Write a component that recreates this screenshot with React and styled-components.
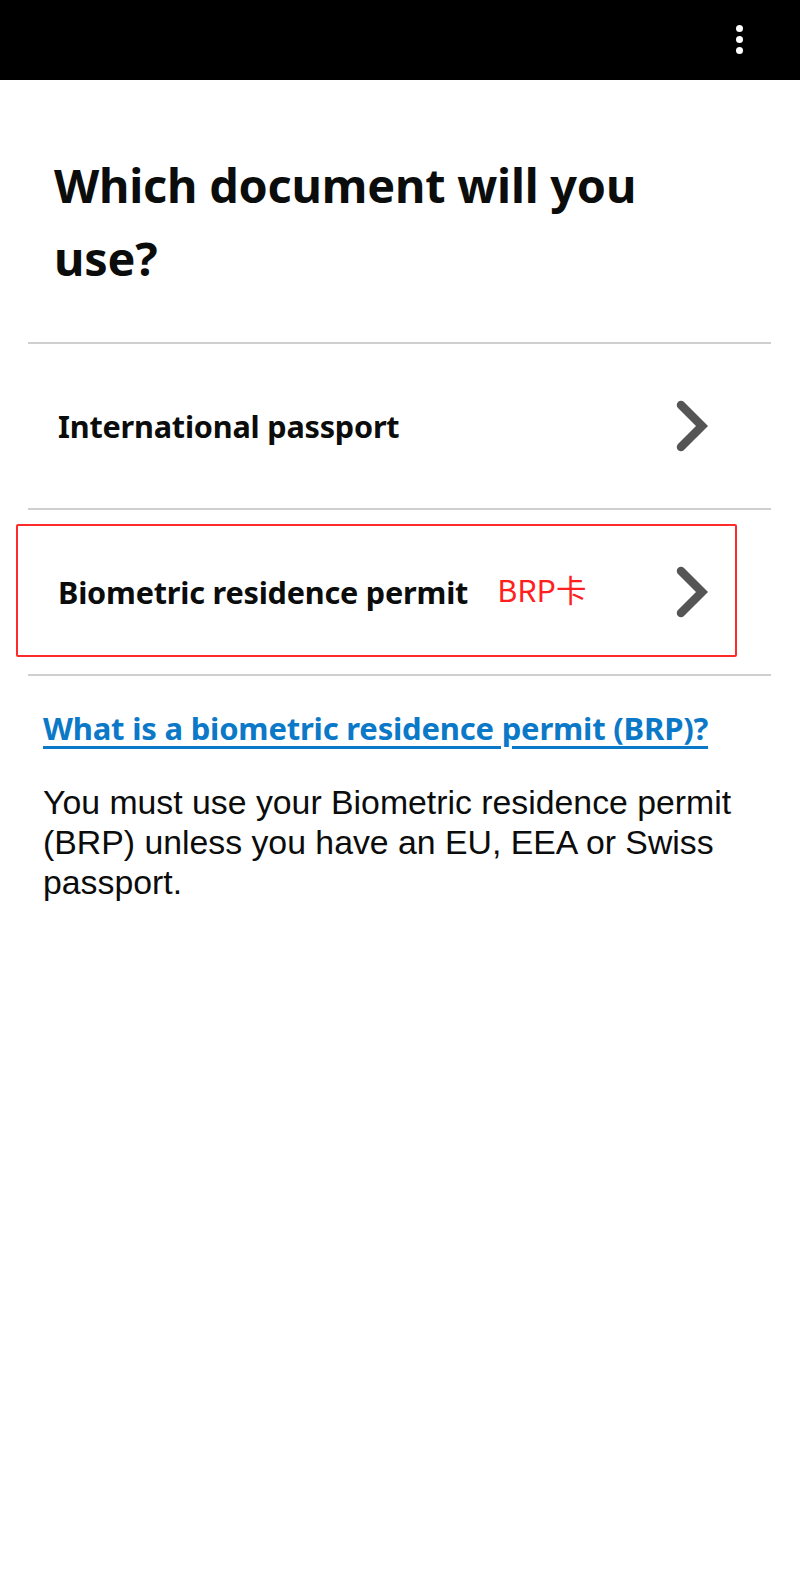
import React from "react";
import styled, { createGlobalStyle } from "styled-components";

const Global = createGlobalStyle`
  html, body { margin: 0; padding: 0; background: #fff; }
  body { width: 800px; min-height: 1573px; }
`;

const Page = styled.div`
  width: 800px;
  min-height: 1573px;
  background: #fff;
  display: flex;
  flex-direction: column;
`;

const TopBar = styled.header`
  height: 80px;
  background: #000;
  display: flex;
  justify-content: flex-end;
  align-items: center;
  padding-right: 57px;
  box-sizing: border-box;
`;

const MenuDots = styled.div`
  display: flex;
  flex-direction: column;
  gap: 4px;
  margin-top: -2px;
`;

const Dot = styled.span`
  width: 7px;
  height: 7px;
  border-radius: 50%;
  background: #fff;
`;

const Content = styled.main`
  display: flex;
  flex-direction: column;
  padding: 0 29px 0 28px;
`;

const Heading = styled.h1`
  margin: 69px 0 0 26px;
  font-family: "Noto Sans", "Open Sans", sans-serif;
  font-weight: 700;
  font-size: 46.8px;
  line-height: 73px;
  color: #0b0c0c;
  letter-spacing: -0.2px;
`;

const List = styled.ul`
  list-style: none;
  margin: 47px 0 0;
  padding: 0;
  border-top: 2px solid #cfcfcf;
`;

const Row = styled.li`
  position: relative;
  height: 164px;
  border-bottom: 2px solid #cfcfcf;
  display: flex;
  align-items: center;
  padding: 0 62px 0 30px;
`;

const RowLabel = styled.span`
  font-family: "Noto Sans", "Open Sans", sans-serif;
  font-weight: 700;
  font-size: 30.6px;
  color: #0b0c0c;
  letter-spacing: -0.2px;
`;

const Note = styled.span`
  margin-left: 29px;
  font-family: "Noto Sans CJK SC", "Noto Sans", sans-serif;
  font-size: 30.5px;
  color: #ff1f1f;
  position: relative;
  top: -3px;
`;

const Spacer = styled.span`
  flex: 1;
`;

const Highlight = styled.div`
  position: absolute;
  left: -12px;
  top: 14px;
  width: 721px;
  height: 133px;
  box-sizing: border-box;
  border: 2px solid #ff2a2a;
  border-radius: 2px;
  pointer-events: none;
`;

const Chevron = () => (
  <svg width="34" height="52" viewBox="0 0 34 52" aria-hidden="true">
    <path
      d="M6 5 L27 26 L6 47"
      fill="none"
      stroke="#555555"
      strokeWidth="8.5"
      strokeLinecap="round"
      strokeLinejoin="miter"
    />
  </svg>
);

const InfoLink = styled.a`
  margin: 31px 0 0 15px;
  font-family: "Noto Sans", "Open Sans", sans-serif;
  font-weight: 700;
  font-size: 31px;
  line-height: 42px;
  color: #0b79c7;
  text-decoration: underline;
  text-decoration-thickness: 3px;
  text-underline-offset: 6px;
  align-self: flex-start;
  letter-spacing: -0.2px;
`;

const Body = styled.p`
  margin: 33px 3px 0 15px;
  font-family: "Liberation Sans", Arial, sans-serif;
  font-size: 33.8px;
  line-height: 40px;
  color: #0b0c0c;
`;

export default function App() {
  return (
    <Page>
      <Global />
      <TopBar>
        <MenuDots>
          <Dot />
          <Dot />
          <Dot />
        </MenuDots>
      </TopBar>
      <Content>
        <Heading>
          Which document will you
          <br />
          use?
        </Heading>
        <List>
          <Row>
            <RowLabel>International passport</RowLabel>
            <Spacer />
            <Chevron />
          </Row>
          <Row>
            <Highlight />
            <RowLabel>Biometric residence permit</RowLabel>
            <Note>BRP卡</Note>
            <Spacer />
            <Chevron />
          </Row>
        </List>
        <InfoLink href="#">What is a biometric residence permit (BRP)?</InfoLink>
        <Body>
          You must use your Biometric residence permit (BRP) unless you have an EU, EEA or Swiss passport.
        </Body>
      </Content>
    </Page>
  );
}
